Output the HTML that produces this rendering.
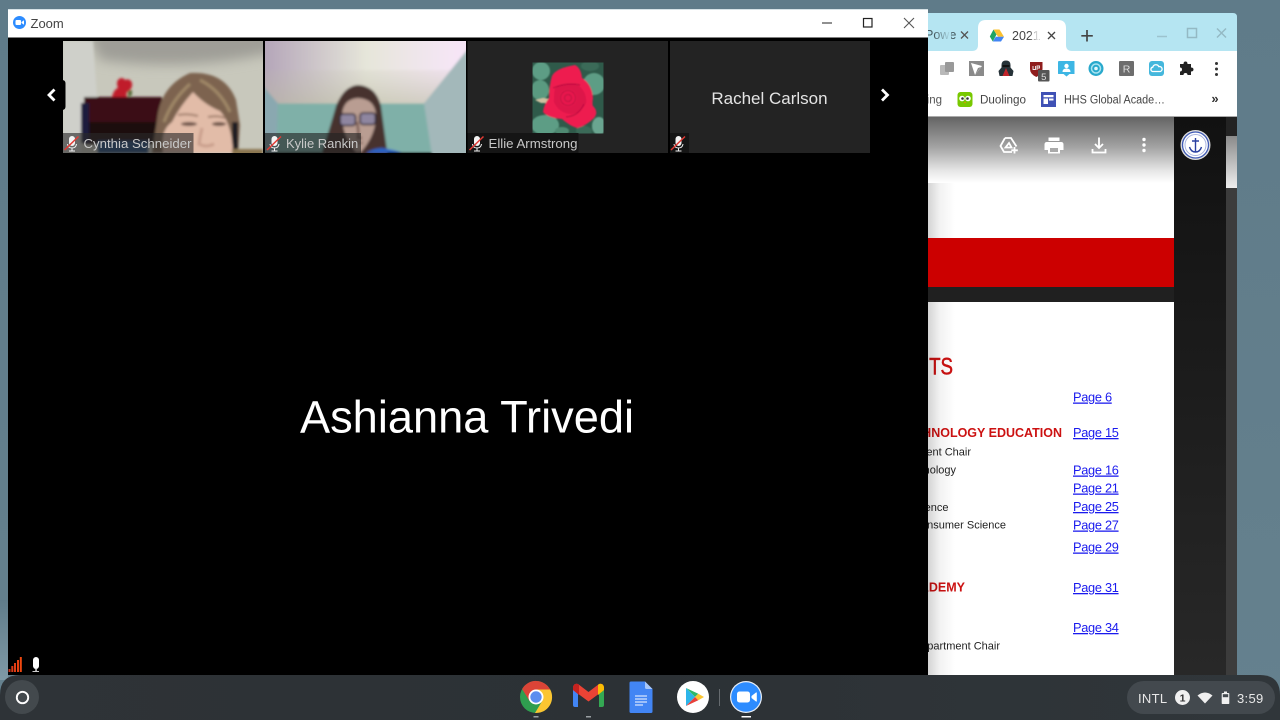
<!DOCTYPE html>
<html lang="en">
<head>
<meta charset="utf-8">
<title>Zoom</title>
<style>
html,body{margin:0;padding:0;width:1280px;height:720px;overflow:hidden;background:#607c8a}
svg{display:block;position:absolute;left:0;top:0;filter:blur(.35px)}
text{font-family:"Liberation Sans",sans-serif}
</style>
</head>
<body>
<svg width="1280" height="720" viewBox="0 0 1280 720" xmlns="http://www.w3.org/2000/svg">
<defs>
<filter id="b1" x="-20%" y="-20%" width="140%" height="140%"><feGaussianBlur stdDeviation="1.300"/></filter>
<filter id="b05" x="-20%" y="-20%" width="140%" height="140%"><feGaussianBlur stdDeviation=".8"/></filter>
<filter id="b4" x="-30%" y="-50%" width="160%" height="200%"><feGaussianBlur stdDeviation="6"/></filter>
<clipPath id="t1"><rect x="63" y="41" width="200" height="112"/></clipPath>
<clipPath id="t2"><rect x="265" y="41" width="201" height="112"/></clipPath>
<clipPath id="t3"><rect x="532.500" y="62.500" width="71" height="71"/></clipPath>
<linearGradient id="wp" x1="0" x2="0" y1="0" y2="1"><stop offset="0" stop-color="#5f7b89"/><stop offset="1" stop-color="#65818e"/></linearGradient>
<linearGradient id="leftstrip" x1="0" x2="0" y1="0" y2="1"><stop offset="0" stop-color="#607c8a"/><stop offset="1" stop-color="#7f9aa6"/></linearGradient>
<linearGradient id="topg" x1="0" x2="0" y1="0" y2="1"><stop offset="0" stop-color="#646464"/><stop offset=".45" stop-color="#a2a2a2"/><stop offset=".8" stop-color="#e4e4e4"/><stop offset="1" stop-color="#fff"/></linearGradient>
<linearGradient id="shadow" x1="0" x2="1" y1="0" y2="0"><stop offset="0" stop-color="#000" stop-opacity=".2"/><stop offset=".5" stop-color="#000" stop-opacity=".05"/><stop offset="1" stop-color="#000" stop-opacity="0"/></linearGradient>
<linearGradient id="thumb" x1="0" x2="0" y1="0" y2="1"><stop offset="0" stop-color="#8a8a8a"/><stop offset="1" stop-color="#eee"/></linearGradient>
<linearGradient id="sb" x1="0" x2="0" y1="0" y2="1"><stop offset="0" stop-color="#111"/><stop offset="1" stop-color="#282828"/></linearGradient>
<linearGradient id="fadeA" x1="0" x2="1" y1="0" y2="0"><stop offset="0" stop-color="#b5e5f2" stop-opacity="0"/><stop offset="1" stop-color="#b5e5f2"/></linearGradient>
<linearGradient id="fadeB" x1="0" x2="1" y1="0" y2="0"><stop offset="0" stop-color="#fff" stop-opacity="0"/><stop offset="1" stop-color="#fff"/></linearGradient>
<linearGradient id="ceil" x1="0" x2="1" y1="0" y2="0"><stop offset="0" stop-color="#b3a4b8"/><stop offset=".5" stop-color="#e6e6da"/><stop offset=".85" stop-color="#f3e6f2"/><stop offset="1" stop-color="#f8e4f8"/></linearGradient>
<linearGradient id="ceil2" x1="0" x2="0" y1="0" y2="1"><stop offset="0" stop-color="#c0bcae" stop-opacity="0"/><stop offset="1" stop-color="#b8b8a0" stop-opacity=".55"/></linearGradient>
<linearGradient id="shelfg" x1="0" x2="1" y1="0" y2="0"><stop offset="0" stop-color="#2e3337"/><stop offset=".5" stop-color="#2c3135"/><stop offset="1" stop-color="#30363a"/></linearGradient>
</defs>

<!-- wallpaper -->
<rect width="1280" height="720" fill="url(#wp)"/>
<rect x="0" y="600" width="8" height="80" fill="url(#leftstrip)"/>

<!-- chrome window -->
<path d="M925 13H1233q4 0 4 4V675H925Z" fill="#b5e5f2"/>
<!-- inactive tab -->
<text x="925" y="39" font-size="12.500" fill="#45595f">Powe</text>
<rect x="934" y="26" width="17" height="18" fill="url(#fadeA)"/>
<path d="M961 31.500l7 7M968 31.500l-7 7" stroke="#555" stroke-width="1.300" fill="none"/>
<!-- active tab -->
<path d="M972 51q6 0 6-6V28q0-8 8-8H1058q8 0 8 8V45q0 6 6 6Z" fill="#fff"/>
<path d="M993.500 29.500l3 5-3.700 7-3-5z" fill="#1fa463"/>
<path d="M993.500 29.500h6l4.500 7.300h-6z" fill="#fbc02d"/>
<path d="M992.800 41.500l3-4.800h8.200l-3 4.800z" fill="#4285f4"/>
<text x="1012" y="40" font-size="12.500" fill="#444">2021</text>
<rect x="1029" y="26" width="10" height="18" fill="url(#fadeB)"/>
<path d="M1048 32l7 7M1055 32l-7 7" stroke="#444" stroke-width="1.300" fill="none"/>
<path d="M1087 30v11.500M1081.300 35.800h11.500" stroke="#444" stroke-width="1.700" fill="none"/>
<path d="M1157 36.500h10" stroke="#9cc3ce" stroke-width="1.500"/>
<rect x="1187.500" y="28.500" width="9" height="9" fill="none" stroke="#94b9c4" stroke-width="1.500"/>
<path d="M1217 28.500l9 9M1226 28.500l-9 9" stroke="#94b9c4" stroke-width="1.500" fill="none"/>

<!-- toolbar -->
<rect x="925" y="51" width="312" height="66" fill="#fff"/>
<rect x="925" y="116" width="312" height="1.500" fill="#aaa"/>
<rect x="940" y="65" width="9" height="10" rx="1" fill="#b9b9b9"/><rect x="945" y="62" width="9" height="10" rx="1" fill="#999"/>
<rect x="969" y="61" width="15" height="15" fill="#8a8a8a"/><path d="M971 63l11 3-7 9z" fill="#fff"/><path d="M975 75l3-7 3-1z" fill="#8a8a8a"/>
<path d="M1006 60.500q-4.500 0-4.500 4.500v2.500l-3 3.500 1 5h13l1-5-3-3.500V65q0-4.500-4.500-4.500z" fill="#263238"/><path d="M1006 68l-3.500 8h7z" fill="#c0242a"/><rect x="1002.500" y="65" width="7" height="2" fill="#111"/>
<path d="M1030 62h12.500v7q0 5-6.200 8-6.300-3-6.300-8z" fill="#8f1d1d"/><path d="M1033 66v3.500h2.500V66M1037 70v-4h2.500v2h-2.500" stroke="#eee" stroke-width=".9" fill="none"/>
<rect x="1038" y="70" width="11.500" height="11.500" rx="1" fill="#555"/><text x="1043.800" y="80" font-size="9.500" fill="#ddd" text-anchor="middle">5</text>
<path d="M1059 61h15q.5 0 .5.500v12.500h-5l-3 2.500-3-2.500h-5q-.5 0-.5-.5v-12z" fill="#3db6e4"/><circle cx="1066.500" cy="66" r="2.200" fill="#fff"/><path d="M1062.500 72q0-3.500 4-3.500t4 3.500z" fill="#fff"/>
<circle cx="1096" cy="68.500" r="7.500" fill="#29a9cc"/><circle cx="1096" cy="68.500" r="4.500" fill="none" stroke="#a9e4f2" stroke-width="1.500"/><circle cx="1096" cy="68.500" r="1.800" fill="#e5f7fb"/>
<rect x="1119" y="61" width="15" height="15" rx="1" fill="#6d6d6d"/><text x="1126.500" y="72.500" font-size="10.500" fill="#ddd" text-anchor="middle">R</text>
<rect x="1149" y="61" width="15" height="15" rx="3" fill="#45b7dc"/><path d="M1152.500 71.500a2.200 2.200 0 0 1 .3-4.300 3.200 3.200 0 0 1 6-.6 2.500 2.500 0 0 1 1.500 4.900z" fill="none" stroke="#fff" stroke-width="1.300"/>
<path d="M1180 64h3.500q0-2.500 2-2.500t2 2.500h3.500v3.500q2.500 0 2.500 2t-2.500 2v3.500h-3.500q0-2-2-2t-2 2h-3.500v-3.500q2 0 2-2t-2-2z" fill="#222"/>
<circle cx="1216.500" cy="63.500" r="1.500" fill="#333"/><circle cx="1216.500" cy="69" r="1.500" fill="#333"/><circle cx="1216.500" cy="74.500" r="1.500" fill="#333"/>
<!-- bookmarks -->
<text x="942" y="103.500" font-size="11.500" fill="#555" text-anchor="end">ing</text>
<rect x="957.500" y="92" width="15" height="15" rx="3" fill="#78c800"/>
<circle cx="962" cy="98.500" r="2.800" fill="#fff"/><circle cx="968" cy="98.500" r="2.800" fill="#fff"/><circle cx="962.500" cy="98.500" r="1.300" fill="#333"/><circle cx="967.500" cy="98.500" r="1.300" fill="#333"/><path d="M964 102h2l-1 1.500z" fill="#f49000"/>
<text x="980" y="103.500" font-size="11.500" fill="#444" textLength="46" lengthAdjust="spacingAndGlyphs">Duolingo</text>
<rect x="1041" y="92" width="15" height="15" fill="#3f51b5"/><path d="M1043.500 95h10v2.200h-10zM1043.500 98.500h4.500v5.500h-4.500zM1049 98.500h4.500v2h-4.500z" fill="#fff"/>
<text x="1064" y="103.500" font-size="11.500" fill="#444" textLength="101" lengthAdjust="spacingAndGlyphs">HHS Global Acade…</text>
<text x="1215" y="103" font-size="13" font-weight="bold" fill="#333" text-anchor="middle">»</text>

<!-- chrome content -->
<rect x="925" y="117" width="312" height="558" fill="#262626"/>
<rect x="925" y="287" width="250" height="15" fill="#202020"/>
<rect x="1174" y="117" width="52" height="558" fill="url(#sb)"/>
<rect x="1226" y="117" width="11" height="558" fill="#3c3c3c"/>
<rect x="1226" y="117" width="11" height="19" fill="#232323"/>
<rect x="1226" y="136" width="11" height="52" fill="url(#thumb)"/>
<rect x="925" y="117" width="249" height="121" fill="#fff"/>
<rect x="925" y="117" width="249" height="66" fill="url(#topg)"/>
<rect x="925" y="238" width="249" height="49" fill="#cc0000"/>
<rect x="925" y="302" width="249" height="373" fill="#fff"/>
<!-- pdf text -->
<g transform="translate(953 374.500) scale(.78 1)"><text x="0" y="0" font-size="24" fill="#cc1111" stroke="#cc1111" stroke-width=".5" text-anchor="end">NTS</text></g>
<g font-size="12.800" fill="#1a1aee" text-decoration="underline" letter-spacing="-.3">
<text x="1073" y="401.500">Page 6</text>
<text x="1073" y="437">Page 15</text>
<text x="1073" y="474.500">Page 16</text>
<text x="1073" y="492.500">Page 21</text>
<text x="1073" y="511">Page 25</text>
<text x="1073" y="529.500">Page 27</text>
<text x="1073" y="551.500">Page 29</text>
<text x="1073" y="592">Page 31</text>
<text x="1073" y="632">Page 34</text>
</g>
<g font-size="12.500" font-weight="bold" fill="#cc1111" text-anchor="end">
<text x="1062" y="437">TECHNOLOGY EDUCATION</text>
<text x="965" y="591.500">ACADEMY</text>
</g>
<g font-size="11" fill="#222" text-anchor="end">
<text x="971" y="455.500">Department Chair</text>
<text x="956" y="473.500">Technology</text>
<text x="948.500" y="511">Science</text>
<text x="1006" y="528.500">Consumer Science</text>
<text x="1000" y="649.500">Department Chair</text>
</g>
<rect x="925" y="302" width="30" height="373" fill="url(#shadow)"/>
<rect x="925" y="183" width="30" height="55" fill="url(#shadow)"/>
<!-- pdf toolbar icons -->
<g fill="none" stroke="#fff" stroke-width="1.800">
<path d="M1005 138h6l5.500 8.500M1005 138l-4.500 8 3.500 6h8M1005.500 147.500l3.500-4.500 2.500 4.500z"/>
<path d="M1014.500 147v6.500M1011.300 150.300h6.500"/>
</g>
<path d="M1048.500 137.500h11v3.500h-11zM1047 142h14q2.500 0 2.500 2.500v5.500h-3.500v3.500h-12v-3.500h-3.500v-5.500q0-2.500 2.500-2.500z" fill="#fff"/><rect x="1050" y="148" width="8" height="4" fill="#aaa"/>
<path d="M1099 137.500v10M1095 144l4 4 4-4M1092.500 149v3.500h13v-3.500" fill="none" stroke="#fff" stroke-width="1.800"/>
<circle cx="1144" cy="139.500" r="1.700" fill="#fff"/><circle cx="1144" cy="145" r="1.700" fill="#fff"/><circle cx="1144" cy="150.500" r="1.700" fill="#fff"/>
<!-- anchor logo -->
<circle cx="1195.500" cy="145" r="15" fill="#dcdcdc"/><circle cx="1195.500" cy="145" r="13" fill="#fff" stroke="#3f5ab5" stroke-width="1.300"/>
<circle cx="1195.500" cy="145" r="10.500" fill="none" stroke="#a8b4e0" stroke-width="1"/>
<path d="M1195.500 138v13.500M1192 141h7M1189.500 147q1.500 5 6 5t6-5" fill="none" stroke="#2a40a0" stroke-width="1.400"/>

<!-- zoom window -->
<rect x="8" y="9" width="920" height="666" fill="#000"/>
<rect x="8" y="9.500" width="920" height="28" fill="#fff"/>
<rect x="8" y="9" width="920" height="1" fill="#d6e2e6"/>
<circle cx="19.500" cy="22.500" r="6.500" fill="#2d8cff"/><rect x="15.500" y="20" width="5.500" height="5" rx="1" fill="#fff"/><path d="M21.500 22l2.500-1.800v4.600l-2.500-1.800z" fill="#fff"/>
<text x="30.500" y="28" font-size="13" fill="#444">Zoom</text>
<path d="M822 23h10" stroke="#555" stroke-width="1.300"/>
<rect x="863.500" y="18.500" width="8.500" height="8.500" fill="none" stroke="#222" stroke-width="1.200"/>
<path d="M904 18l10 10M914 18l-10 10" stroke="#555" stroke-width="1.100" fill="none"/>

<!-- tile 1 -->
<g clip-path="url(#t1)">
<rect x="63" y="41" width="200" height="112" fill="#c8c8bc"/>
<path d="M85 30H275V52Q190 72 100 60Z" fill="#9f9e97" filter="url(#b4)"/>
<g filter="url(#b1)">
<path d="M63 41h30l4 56H84l-3 56H63z" fill="#cfd0ca"/>
<path d="M84 97h78v38H84z" fill="#3a1014"/>
<path d="M84 122h82v22H84z" fill="#1b0c0f"/>
<path d="M81 103h8v40h-8z" fill="#1b1b3c"/>
<path d="M98 141h50v12H98z" fill="#1f4578"/>
<path d="M112 97q2-8 6-9-3-8 3-10 3 0 4 2 5-2 7 3 1 6-5 9-1 3 0 5z" fill="#c01c2c"/>
<path d="M128 91l4-1 0 5-4 2z" fill="#586a38"/>
<path d="M152 153 157 120Q160 86 190 73 225 71 236 100L240 125 238 153z" fill="#7d6450"/>
<path d="M164 122Q172 100 190 84M200 80Q220 90 230 112" stroke="#a08868" stroke-width="3" fill="none"/>
<path d="M232 122h6v31h-6z" fill="#1e1a24"/>
<path d="M163 153Q160 130 172 122 180 106 193 92 205 105 220 111 232 124 233 153z" fill="#e2bca8"/>
<path d="M178 115q10-2 20 1M208 117q9-2 17 1" stroke="#a17f6c" stroke-width="2" fill="none"/>
<ellipse cx="189" cy="124" rx="8" ry="2" fill="#6f5449"/>
<ellipse cx="219" cy="124" rx="7" ry="2" fill="#6f5449"/>
<path d="M202 128q-2 8-3 16 7 4 15 0" stroke="#c99f8c" stroke-width="3" fill="none"/>
<path d="M232 149h31v6h-31z" fill="#8a7550"/>
</g>
<rect x="63" y="133" width="130.500" height="20" fill="#2a2a2a" fill-opacity=".62"/>
</g>

<!-- tile 2 -->
<g clip-path="url(#t2)">
<g filter="url(#b1)">
<rect x="265" y="41" width="201" height="112" fill="#7fb0a8"/>
<path d="M262 36H472V44L424 103.500H278L262 85z" fill="url(#ceil)"/>
<path d="M262 70H472V60L424 103.500H278L262 85z" fill="url(#ceil2)"/>
<path d="M262 85l16 18.500-2 50h-14z" fill="#8aa8b0"/>
<path d="M424 103.500 472 44v112h-40z" fill="#a3b8ba"/>
<path d="M320 158Q330 128 336 106 344 86 358 85 376 86 381 106L388 158z" fill="#46322d"/>
<path d="M342 115q1-16 16-17 17 1 18 17 0 20-15 37h-5q-14-16-14-37z" fill="#b99d92"/>
<rect x="340" y="114" width="15.500" height="11.500" rx="3" fill="#8f86a0" stroke="#2b2430" stroke-width="1.600"/>
<rect x="360" y="113" width="15.500" height="11.500" rx="3" fill="#8f86a0" stroke="#2b2430" stroke-width="1.600"/>
<path d="M357 122q2 10 1 16h4" stroke="#7a5c52" stroke-width="2.500" fill="none"/>
<path d="M351 143h12" stroke="#7f5f58" stroke-width="1.500"/>
<path d="M366 153q8-5 16-5 14 2 20 5z" fill="#2964c4"/>
</g>
<rect x="265" y="133" width="96" height="20" fill="#222" fill-opacity=".62"/>
</g>

<!-- tile 3 -->
<rect x="467.500" y="41" width="200.500" height="112" fill="#232323"/>
<g clip-path="url(#t3)">
<rect x="532" y="62" width="72" height="72" fill="#2f5a4a"/>
<g filter="url(#b05)">
<ellipse cx="541" cy="71" rx="9" ry="9" fill="#5d9d85"/>
<ellipse cx="540" cy="90" rx="9" ry="10" fill="#5a9a80"/>
<ellipse cx="594" cy="84" rx="11" ry="11" fill="#5d9d85"/>
<ellipse cx="590" cy="66" rx="9" ry="5" fill="#3a6a58"/>
<ellipse cx="545" cy="125" rx="14" ry="10" fill="#5d9d85"/>
<ellipse cx="599" cy="126" rx="7" ry="9" fill="#6aa590"/>
<ellipse cx="562" cy="131" rx="7" ry="4" fill="#4f8a72"/>
<ellipse cx="584" cy="131" rx="8" ry="5" fill="#3a6a58"/>
<path d="M535 100l8-2 8 1v4h-10z" fill="#cfc0a0"/>
<path d="M552 76Q556 68 575 65 581 68 582 78 592 84 593 98 592 104 593 106 599 112 594 118 586 126 577 128 570 126 562 119 548 118 543 112 544 104 549 98 549 86 552 76z" fill="#ee1a50"/>
<path d="M555 88q12-7 24-2 8 7 7 17-5 10-15 11-12-1-17-12 0-8 1-14z" fill="#dd1249"/>
<circle cx="568" cy="98" r="9" fill="#e8184e"/>
<circle cx="568" cy="98" r="7.500" fill="none" stroke="#bd0f3f" stroke-width="1"/>
<circle cx="568" cy="98" r="3.500" fill="none" stroke="#bd0f3f" stroke-width="1"/>
<path d="M553 88q14-6 27-3M584 104q-5 12-18 13" stroke="#bd0f3f" stroke-width="1.200" fill="none"/>
</g>
</g>
<rect x="467.500" y="133" width="111" height="20" fill="#151515"/>

<!-- tile 4 -->
<rect x="670" y="41" width="200" height="112" fill="#232323"/>
<rect x="670" y="133" width="19" height="20" fill="#151515"/>
<text x="769.500" y="104" font-size="17" fill="#e4e4e4" text-anchor="middle">Rachel Carlson</text>

<!-- tile labels -->
<g fill="#c8c8c8">
<text x="83.500" y="148" font-size="13" textLength="108" lengthAdjust="spacingAndGlyphs">Cynthia Schneider</text>
<text x="286" y="148" font-size="13">Kylie Rankin</text>
<text x="488.500" y="148" font-size="13" textLength="89" lengthAdjust="spacingAndGlyphs">Ellie Armstrong</text>
</g>
<!-- muted icons -->
<g>
<rect x="69" y="136" width="6" height="10" rx="3" fill="#f4f4f4"/><path d="M67.500 144q.5 4 4.500 4t4.500-4M72 148v2.500M69 151h6" stroke="#f4f4f4" stroke-width="1" fill="none"/>
<path d="M64.500 150 78.500 136.500" stroke="#e23a34" stroke-width="1.500"/>
</g>
<g>
<rect x="271.500" y="136" width="6" height="10" rx="3" fill="#f4f4f4"/><path d="M270 144q.5 4 4.500 4t4.500-4M274.500 148v2.500M271.500 151h6" stroke="#f4f4f4" stroke-width="1" fill="none"/>
<path d="M267 150 281 136.500" stroke="#e23a34" stroke-width="1.500"/>
</g>
<g>
<rect x="474" y="136" width="6" height="10" rx="3" fill="#f4f4f4"/><path d="M472.500 144q.5 4 4.500 4t4.500-4M477 148v2.500M474 151h6" stroke="#f4f4f4" stroke-width="1" fill="none"/>
<path d="M469.500 150 483.500 136.500" stroke="#e23a34" stroke-width="1.500"/>
</g>
<g>
<rect x="675.500" y="136" width="6" height="10" rx="3" fill="#f4f4f4"/><path d="M674 144q.5 4 4.500 4t4.500-4M678.500 148v2.500M675.500 151h6" stroke="#f4f4f4" stroke-width="1" fill="none"/>
<path d="M671 150 685 136.500" stroke="#e23a34" stroke-width="1.500"/>
</g>

<!-- nav arrows -->
<path d="M37 80h25q3.500 0 3.500 3.500v23q0 3.500-3.500 3.500H37z" fill="#000"/>
<path d="M54.500 89.500 49 95l5.500 5.500" fill="none" stroke="#fff" stroke-width="2.800"/>
<path d="M898 80h-28v30h28z" fill="#000"/>
<path d="M882 89.500 887.500 95 882 100.500" fill="none" stroke="#fff" stroke-width="2.800"/>

<!-- main name -->
<text x="467" y="432.500" font-size="45.200" fill="#fff" text-anchor="middle">Ashianna Trivedi</text>

<!-- bottom left indicators -->
<rect x="8.500" y="669" width="2" height="3" fill="#c83218"/>
<rect x="11.300" y="666" width="2" height="6" fill="#d83a18"/>
<rect x="14" y="663" width="2" height="9" fill="#e03c14"/>
<rect x="17" y="660" width="2" height="12" fill="#e84010"/>
<rect x="19.800" y="657" width="2" height="15" fill="#f04810"/>
<rect x="33" y="657" width="6" height="12" rx="3" fill="#fff"/><rect x="35.300" y="669" width="1.500" height="2" fill="#ddd"/><rect x="32.500" y="671" width="6.500" height="1" fill="#ccc"/>

<!-- shelf -->
<path d="M0 720V695q0-20 20-20H1260q20 0 20 20v25z" fill="url(#shelfg)"/>
<circle cx="22" cy="697" r="17" fill="#43494d"/>
<circle cx="22.500" cy="697.500" r="5.700" fill="none" stroke="#fff" stroke-width="1.900"/>

<!-- chrome icon -->
<g transform="translate(536 697)">
<circle r="16" fill="#2f9e4f"/>
<path d="M0-7.500H14.200A16 16 0 0 1 -1 16L6.500 3.500z" fill="#fbc531"/>
<path d="M0-7.500H14.200A16 16 0 0 0 -13.860-8L-6.500 4z" fill="#db4437"/>
<circle r="7.500" fill="#fff"/><circle r="5.700" fill="#5b8def"/>
</g>
<!-- gmail -->
<path d="M573 687l5-2v22h-3q-2 0-2-2z" fill="#4285f4"/>
<path d="M604 687l-5-2v22h3q2 0 2-2z" fill="#34a853"/>
<path d="M573 687q1-4 5-3l10.500 8 10.500-8q4-1 5 3v3l-15.500 11.500L573 690z" fill="#ea4335"/>
<path d="M573 687q1-4 5-3l1 1v10l-6-5z" fill="#c5221f"/>
<path d="M604 687q-1-4-5-3l-1 1v10l6-5z" fill="#fbbc04"/>
<!-- docs -->
<path d="M629.500 683q0-1.500 1.500-1.500H645l7.500 7.500v22.500q0 1.500-1.500 1.500h-20q-1.500 0-1.500-1.500z" fill="#4285f4"/>
<path d="M645 681.500v6q0 1.500 1.500 1.500h6z" fill="#a8c7fa"/>
<path d="M635 696h12M635 699h12M635 702h12M635 705h8" stroke="#d6e4fd" stroke-width="1.300"/>
<!-- play -->
<circle cx="693" cy="697" r="16" fill="#fff"/>
<path d="M686 688l9 9 3.300-3.300z" fill="#2fb96a"/>
<path d="M698.300 693.700l-3.300 3.300 3.300 3.300 5.700-3.300z" fill="#fbc531"/>
<path d="M686 688v18l9-9z" fill="#2db5ea"/>
<path d="M686 706l9-9 3.300 3.300z" fill="#e8413a"/>
<rect x="719" y="689" width="1" height="17" fill="#666b6f"/>
<!-- zoom -->
<circle cx="746" cy="697" r="16" fill="#e8eef6"/>
<circle cx="746" cy="697" r="14.800" fill="#2d8cff"/>
<rect x="737" y="691.500" width="13" height="11" rx="2.500" fill="#fff"/>
<path d="M751.500 696l4.500-3.500q.8-.4.8.5v8q0 .9-.8.5l-4.500-3.500z" fill="#fff"/>
<!-- dots -->
<rect x="533.500" y="716" width="5" height="1.500" fill="#9aa0a3"/>
<rect x="586" y="716" width="5" height="1.500" fill="#9aa0a3"/>
<rect x="741.500" y="716" width="9.500" height="1.500" fill="#fff"/>

<!-- tray -->
<rect x="1127" y="681" width="148" height="33" rx="16.500" fill="#43494e"/>
<text x="1138" y="703" font-size="13" fill="#e8e8e8" letter-spacing=".3">INTL</text>
<circle cx="1182.500" cy="697.500" r="7.500" fill="#f0f0f0"/>
<text x="1182.500" y="701.500" font-size="10.500" font-weight="bold" fill="#333" text-anchor="middle">1</text>
<path d="M1197.500 695.500q7.500-6 15 0l-7.500 8z" fill="#f0f0f0"/>
<path d="M1222.500 693h6q.8 0 .8.8v9.400q0 .8-.8.800h-6q-.8 0-.8-.8v-9.400q0-.8.800-.8zM1224 691.500h3v1.500h-3z" fill="#f0f0f0"/>
<rect x="1222.800" y="694.200" width="5.400" height="3" fill="#43494e"/>
<text x="1237" y="703" font-size="13" fill="#e8e8e8" letter-spacing=".3">3:59</text>
</svg>
</body>
</html>
